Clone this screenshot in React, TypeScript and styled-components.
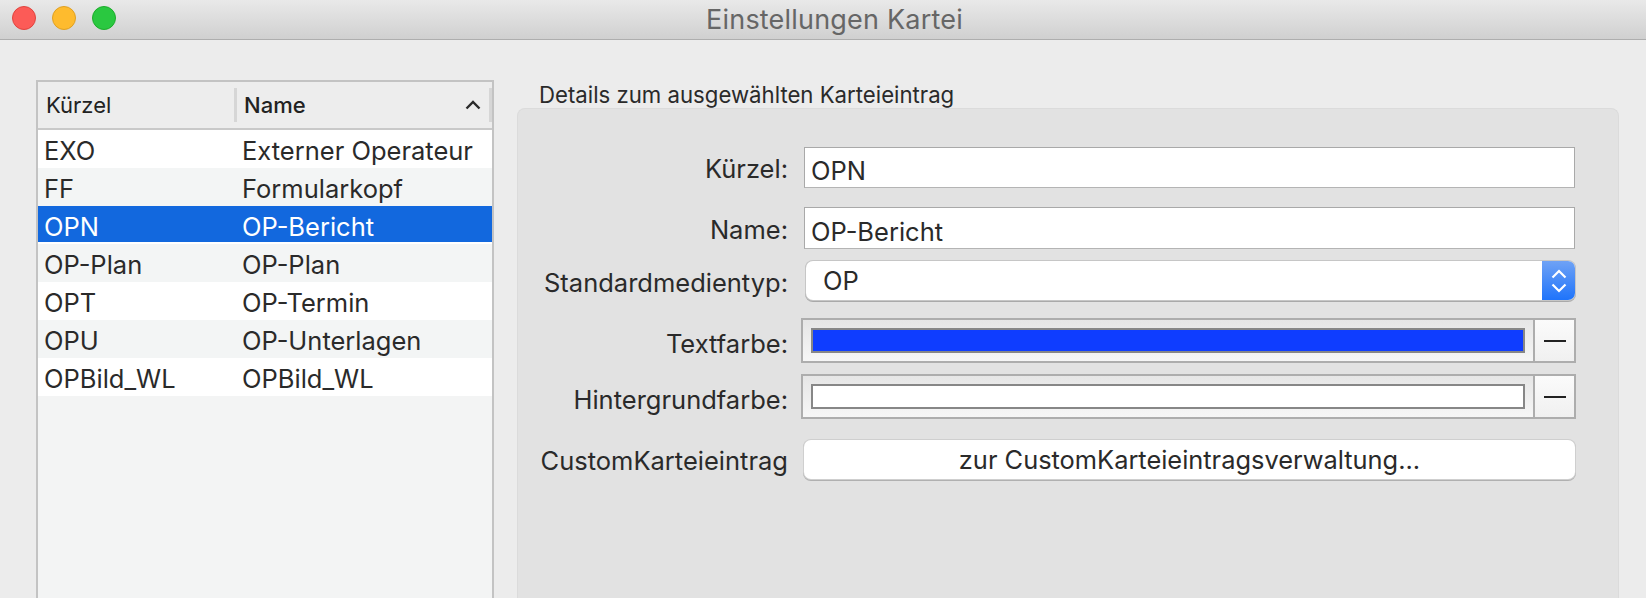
import React from "react";
import styled, { createGlobalStyle } from "styled-components";

const Global = createGlobalStyle`
  html, body { margin: 0; padding: 0; background: #ececec; }
  body { font-family: Inter, "Liberation Sans", sans-serif; color: #262626; }
  * { box-sizing: border-box; }
`;

const Window = styled.div`
  width: 1646px;
  height: 598px;
  display: flex;
  flex-direction: column;
  overflow: hidden;
  background: #ececec;
`;

const TitleBar = styled.header`
  position: relative;
  flex: 0 0 40px;
  display: flex;
  align-items: center;
  justify-content: center;
  padding-left: 23px;
  background: linear-gradient(#e9e9e9, #d0d0d0);
  border-bottom: 1px solid #aeaeae;
`;

const Lights = styled.div`
  position: absolute;
  left: 12px;
  top: 6px;
  display: flex;
  gap: 16px;
`;

const Light = styled.span<{ $fill: string; $edge: string }>`
  width: 24px;
  height: 24px;
  border-radius: 50%;
  background: ${(p) => p.$fill};
  border: 1px solid ${(p) => p.$edge};
`;

const Title = styled.h1`
  margin: 0;
  font-size: 27px;
  font-weight: 400;
  color: #666;
  letter-spacing: 0.2px;
`;

const Body = styled.main`
  flex: 1;
  min-height: 0;
  display: flex;
  padding: 40px 27px 0 36px;
  gap: 23px;
`;

const Table = styled.section`
  flex: 0 0 458px;
  display: flex;
  flex-direction: column;
  border: 2px solid #c3c3c3;
  border-bottom: 0;
  background: #f3f4f4;
`;

const HeaderRow = styled.div`
  flex: 0 0 48px;
  display: grid;
  grid-template-columns: 199px 1fr;
  align-items: center;
  background: #ededed;
  border-bottom: 2px solid #c9c9c9;
`;

const HeaderCell = styled.div<{ $active?: boolean }>`
  height: 34px;
  display: flex;
  align-items: center;
  justify-content: space-between;
  padding: 0 8px 0 ${(p) => (p.$active ? "7px" : "8px")};
  font-size: 22px;
  font-weight: ${(p) => (p.$active ? 500 : 400)};
  color: #222;
  border-right: 3px solid #d6d6d6;
`;

const Row = styled.div<{ $selected?: boolean; $odd?: boolean }>`
  flex: 0 0 38px;
  display: grid;
  grid-template-columns: 198px 1fr;
  align-items: center;
  font-size: 25.5px;
  padding: 3px 0 0 6px;
  color: ${(p) => (p.$selected ? "#fff" : "#2a2a2a")};
  background: ${(p) => (p.$selected ? "#1268de" : p.$odd ? "#f3f5f5" : "#fff")};
  box-shadow: ${(p) => (p.$selected ? "inset 0 -2px 0 #fff" : "none")};
`;

const Details = styled.section`
  flex: 1;
  min-width: 0;
  display: flex;
  flex-direction: column;
`;

const Legend = styled.div`
  flex: 0 0 28px;
  min-height: 0;
  height: 28px;
  padding-left: 22px;
  font-size: 22.2px;
  line-height: 30px;
  color: #2a2a2a;
  white-space: nowrap;
`;

const Panel = styled.div`
  flex: 1;
  display: flex;
  flex-direction: column;
  padding: 38px 42px 0 0;
  background: #e2e2e2;
  border: 1px solid #dbdbdb;
  border-bottom: 0;
  border-radius: 8px 8px 0 0;
`;

const FormRow = styled.div<{ $top: number; $h: number }>`
  display: grid;
  grid-template-columns: 270px 1fr;
  align-items: center;
  height: ${(p) => p.$h}px;
  margin-top: ${(p) => p.$top}px;
`;

const Label = styled.label<{ $drop?: number }>`
  padding-top: ${(p) => p.$drop ?? 2}px;
  text-align: right;
  font-size: 25.5px;
  color: #2a2a2a;
  white-space: nowrap;
`;

const TextField = styled.div`
  height: 100%;
  margin-left: 16px;
  margin-right: 1px;
  padding: 6px 0 0 6px;
  display: flex;
  align-items: center;
  font-size: 25.5px;
  color: #2a2a2a;
  background: #fff;
  border: 1px solid #a9a9a9;
  border-bottom-color: #b4b4b4;
`;

const Select = styled.div`
  height: 100%;
  margin-left: 18px;
  margin-right: 1px;
  display: flex;
  align-items: center;
  justify-content: space-between;
  font-size: 25.5px;
  color: #2a2a2a;
  background: #fff;
  border-radius: 7px;
  box-shadow: 0 0 0 1px #c6c6c6, 0 1px 0 1px #a9a9a9;
  overflow: hidden;
`;

const SelectValue = styled.span`
  padding-left: 17px;
`;

const Stepper = styled.span`
  flex: 0 0 33px;
  height: 100%;
  display: flex;
  align-items: center;
  justify-content: center;
  background: linear-gradient(#6fa2f5, #1f74fb);
`;

const Well = styled.div`
  height: 100%;
  margin-left: 13px;
  display: flex;
  border: 2px solid #adadad;
  background: linear-gradient(#e6e6e6, #f6f6f6);
`;

const SwatchArea = styled.div`
  flex: 1;
  padding: 8px;
  border-right: 2px solid #adadad;
`;

const Swatch = styled.div<{ $color: string }>`
  height: 100%;
  background: ${(p) => p.$color};
  border: 2px solid #878787;
`;

const ClearButton = styled.div`
  flex: 0 0 39px;
  display: flex;
  align-items: center;
  justify-content: center;
  background: linear-gradient(#fbfbfb, #f0f0f0);
`;

const Dash = styled.span`
  width: 22px;
  height: 2px;
  background: #222;
`;

const PushButton = styled.div`
  height: 100%;
  margin-left: 16px;
  margin-right: 1px;
  display: flex;
  align-items: center;
  justify-content: center;
  font-size: 25.4px;
  color: #2a2a2a;
  background: #fff;
  border-radius: 7px;
  box-shadow: 0 0 0 1px #cfcfcf, 0 1px 0 1px #b0b0b0;
`;

const rows = [
  ["EXO", "Externer Operateur"],
  ["FF", "Formularkopf"],
  ["OPN", "OP-Bericht"],
  ["OP-Plan", "OP-Plan"],
  ["OPT", "OP-Termin"],
  ["OPU", "OP-Unterlagen"],
  ["OPBild_WL", "OPBild_WL"],
];

export default function App() {
  return (
    <Window>
      <Global />
      <TitleBar>
        <Lights>
          <Light $fill="#fc5b57" $edge="#e0443e" />
          <Light $fill="#febb2e" $edge="#dfa023" />
          <Light $fill="#2ac840" $edge="#1dad2b" />
        </Lights>
        <Title>Einstellungen Kartei</Title>
      </TitleBar>
      <Body>
        <Table>
          <HeaderRow>
            <HeaderCell>Kürzel</HeaderCell>
            <HeaderCell $active>
              Name
              <svg width="16" height="10" viewBox="0 0 16 10" fill="none">
                <path d="M1.5 8.5 8 2l6.5 6.5" stroke="#2b2b2b" strokeWidth="2.4" />
              </svg>
            </HeaderCell>
          </HeaderRow>
          {rows.map(([a, b], i) => (
            <Row key={a} $odd={i % 2 === 1} $selected={a === "OPN"}>
              <span>{a}</span>
              <span>{b}</span>
            </Row>
          ))}
        </Table>
        <Details>
          <Legend>Details zum ausgewählten Karteieintrag</Legend>
          <Panel>
            <FormRow $top={0} $h={41}>
              <Label>Kürzel:</Label>
              <TextField>OPN</TextField>
            </FormRow>
            <FormRow $top={19} $h={42}>
              <Label>Name:</Label>
              <TextField>OP-Bericht</TextField>
            </FormRow>
            <FormRow $top={12} $h={39}>
              <Label $drop={4}>Standardmedientyp:</Label>
              <Select>
                <SelectValue>OP</SelectValue>
                <Stepper>
                  <svg width="16" height="26" viewBox="0 0 16 26" fill="none">
                    <path d="M1.5 9.5 8 3l6.5 6.5M1.5 16.5 8 23l6.5-6.5" stroke="#fff" strokeWidth="2.2" />
                  </svg>
                </Stepper>
              </Select>
            </FormRow>
            <FormRow $top={18} $h={45}>
              <Label $drop={6}>Textfarbe:</Label>
              <Well>
                <SwatchArea>
                  <Swatch $color="#0f3dff" />
                </SwatchArea>
                <ClearButton>
                  <Dash />
                </ClearButton>
              </Well>
            </FormRow>
            <FormRow $top={11} $h={45}>
              <Label $drop={6}>Hintergrundfarbe:</Label>
              <Well>
                <SwatchArea>
                  <Swatch $color="#ffffff" />
                </SwatchArea>
                <ClearButton>
                  <Dash />
                </ClearButton>
              </Well>
            </FormRow>
            <FormRow $top={21} $h={39}>
              <Label>CustomKarteieintrag</Label>
              <PushButton>zur CustomKarteieintragsverwaltung...</PushButton>
            </FormRow>
          </Panel>
        </Details>
      </Body>
    </Window>
  );
}
